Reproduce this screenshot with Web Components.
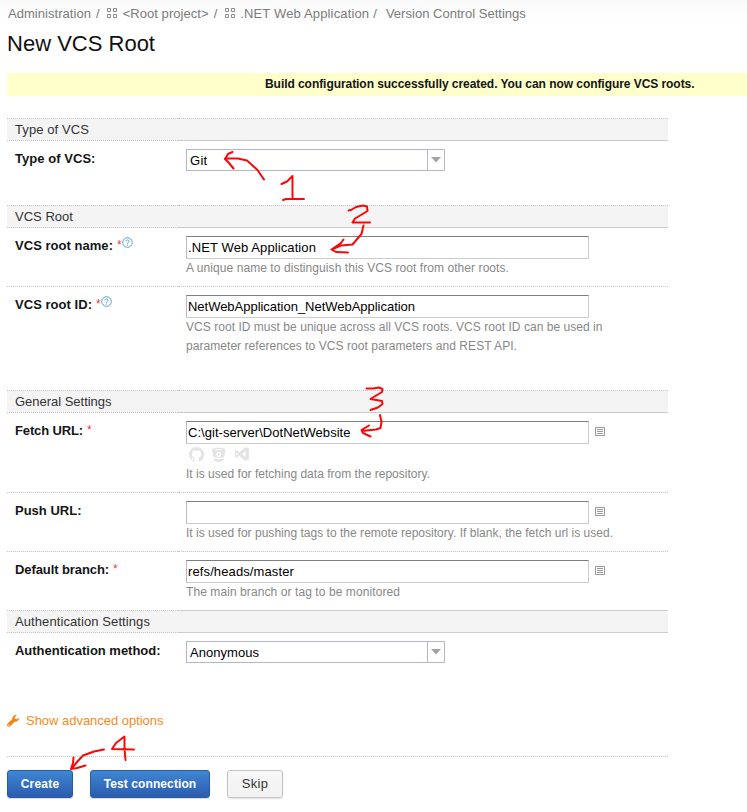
<!DOCTYPE html>
<html lang="en">
<head>
<meta charset="utf-8">
<title>New VCS Root</title>
<style>
  body { margin: 0; background: #fff; font: 13px "Liberation Sans", Arial, sans-serif; color: #151515; }
</style>
</head>
<body>
<vcs-page></vcs-page>
<script>
const define = (name, html, setup) => {
  const t = document.createElement('template');
  t.innerHTML = html;
  customElements.define(name, class extends HTMLElement {
    constructor() {
      super();
      this.attachShadow({ mode: 'open' }).appendChild(t.content.cloneNode(true));
    }
    connectedCallback() { if (setup) setup(this, this.shadowRoot); }
  });
};

/* A single line of text tracked out or in to an exact advance width. */
define('text-run', `<style>:host{display:inline-block;white-space:nowrap}span{display:inline-block}</style><span><slot></slot></span>`, (el, root) => {
  const w = parseFloat(el.getAttribute('w')), s = root.querySelector('span');
  if (!w) return;
  const natural = s.getBoundingClientRect().width;
  s.style.letterSpacing = ((w - natural) / el.textContent.length).toFixed(4) + 'px';
  el.style.width = w + 'px';
});

define('project-icon', `<style>:host{display:block;width:10px;height:10px}svg{display:block}</style>
<svg width="10" height="10" fill="none" stroke="#8c8c8c"><path d="M.5.5h3v3h-3zM6.5.5h3v3h-3zM.5 6.5h3v3h-3zM6.5 6.5h3v3h-3z"/></svg>`);

define('crumb-bar', `<style>
:host{display:flex;height:27px;padding-left:8px;line-height:19px;color:#7b7b7b;background:linear-gradient(#fafafa,#fff);box-sizing:border-box;padding-top:4px}
project-icon{margin-top:4px}
</style>
<text-run w="83">Administration</text-run><text-run style="margin-left:5px">/</text-run>
<project-icon style="margin-left:7px"></project-icon><text-run w="86" style="margin-left:6px">&lt;Root project&gt;</text-run><text-run style="margin-left:5px">/</text-run>
<project-icon style="margin-left:8px"></project-icon><text-run w="129" style="margin-left:5px">.NET Web Application</text-run><text-run style="margin-left:4px">/</text-run>
<text-run w="140" style="margin-left:9px">Version Control Settings</text-run>`);

define('page-title', `<style>:host{display:block;padding:4px 0 0 7px;height:46px;box-sizing:border-box;font-size:22px;line-height:25px;color:#111}</style><slot></slot>`);

define('notice-bar', `<style>:host{display:block;margin-left:7px;height:23px;background:#ffc;font-size:12px;font-weight:bold;line-height:23px;padding-left:258px;box-sizing:border-box;white-space:nowrap}</style><slot></slot>`);

define('section-head', `<style>
:host{display:grid;grid-template-columns:171px 1fr;height:23px;background:#f4f4f4;color:#333}
div{border-top:1px dotted #c4c4c4;border-bottom:1px dotted #c4c4c4;line-height:21px}
.t{padding-left:8px}
.r{border-bottom:1px solid #ccc}
:host([solid]) .r{border-top:1px solid #ccc}
</style><div class="t"><slot></slot></div><div class="r"></div>`);

define('form-row', `<style>
:host{display:grid;grid-template-columns:171px 1fr;box-sizing:border-box;height:var(--h)}
:host([line]) div{border-bottom:1px dotted #c4c4c4}
.l{padding:8px 0 0 8px;font-weight:bold;line-height:19px;display:flex;align-items:flex-start}
.v{padding:8px 0 0 8px}
</style><div class="l"><slot name="label"></slot></div><div class="v"><slot></slot></div>`);

define('required-mark', `<style>:host{display:block;width:5px;margin-left:4px;font-weight:normal;font-size:12px;line-height:19px;color:#e8403a}</style>*`);

define('help-icon', `<style>:host{display:block;width:10px;height:10px;margin:1px 0 0 0}svg{display:block}</style>
<svg width="11" height="11" fill="none" stroke="#5b9fd0"><circle cx="5.5" cy="5.5" r="4.8"/><path d="M3.9 4.4C3.9 2.4 7.1 2.5 7.1 4.3C7.1 5.3 5.5 5.4 5.5 6.8M5.5 7.6v1"/></svg>`);

define('text-field', `<style>
:host{display:flex}
.box{width:403px;height:23px;box-sizing:border-box;border:1px solid #ccc;border-top-color:#7f7f7f;border-left-color:#bbb;padding-left:1px;line-height:21px;color:#000;background:#fff}
svg{display:none;margin:6px 0 0 6px}
:host([menu]) svg{display:block}
</style><div class="box"><slot></slot></div>
<svg width="10" height="9" fill="none" stroke="#999"><path d="M.5.5h9v8h-9zM2 2.5h6M2 4.5h6M2 6.5h6"/></svg>`);

define('select-field', `<style>
:host{display:flex;width:259px;height:22px;box-sizing:border-box;border:1px solid #b5b5cb;background:#fff;color:#000;line-height:21px}
.v{width:240px;padding-left:3px;box-sizing:border-box}
.a{flex:1;border-left:1px solid #b5b5cb;display:flex;align-items:center;justify-content:center}
</style><div class="v"><slot></slot></div><div class="a"><svg width="10" height="6"><path d="M0 0h10L5 5.5z" fill="#a3a3a3"/></svg></div>`);

define('field-note', `<style>:host{display:block;font-size:12px;line-height:19px;color:#888}::slotted(text-run){display:block!important}</style><slot></slot>`);

define('host-icons', `<style>:host{display:block;height:21px;padding:3px 0 0 3px;box-sizing:border-box}svg{display:block}</style>
<svg width="62" height="16" fill="#e4e4e4">
<path d="M7.5 0C3.4 0 0 3.4 0 7.6c0 3.3 2.1 6.1 5.1 7.1.4.1.5-.2.5-.4v-1.6c-2 .4-2.5-.8-2.7-1.2-.2-.5-.8-1-.8-1.1.9-.3 1.5.6 1.8 1 .5.8 1.200.6 1.700.4.1-.5.3-.8.5-1C4 10.600 3 9.600 3 7.300c0-.9.3-1.500.8-2-.1-.3-.3-1.100.1-2.100 0 0 .7-.2 2.100.8 1-.3 2.200-.3 3.200 0 1.400-1 2-.8 2-.8.5 1 .2 1.800.1 2.100.5.5.8 1.200.8 2 0 2.300-1.100 3.300-2.800 3.500.3.300.5.700.5 1.400v2.100c0 .2.100.500.500.400 3-1 5-3.800 5-7.100C15.100 3.400 11.700 0 7.500 0z"/>
<path fill-rule="evenodd" d="M23 2.500C23 0 36.500 0 36.500 2.500L35.300 9.500C34 11.300 25.500 11.300 24.200 9.500zM25.200 2.600C26 3.600 33.500 3.600 34.300 2.600C33.500 1.700 26 1.700 25.200 2.600zM29.750 4.900a2.500 2.500 0 1 0 .01 0zM29.750 6.300a1.100 1.100 0 1 1-.01 0zM24.600 11C27 12.600 32.500 12.600 34.900 11L34.300 13.500C33 15.400 26.500 15.400 25.200 13.500z"/>
<path fill-rule="evenodd" d="M56.500 0L60 1.400V12.600L56.500 14L50.300 8.700L47.300 11L46 10.300V3.700L47.300 3L50.300 5.300zM56.500 4L53 7L56.500 10zM47.500 5.300V8.700L49.200 7z"/>
</svg>`);

define('advanced-link', `<style>:host{display:flex;padding-left:7px;color:#f98a18;line-height:19px}svg{display:block;margin:4px 7px 0 0}</style>
<svg width="12" height="12" viewBox="0 0 12 12"><path fill="#fb820a" d="M11.800 2.400L9.800 4.300L8.100 3.900L7.700 2.200L9.600.2C7.500-.3 5.200 1.200 5.300 4.100L.5 8.800C-.2 9.600-.1 10.600.5 11.300C1.200 12 2.400 12 3.100 11.300L7.700 6.700C10.400 7 12.300 4.800 11.800 2.400zM1.800 9.600a.6.6 0 1 1-.01 0z"/></svg><slot></slot>`);

define('push-button', `<style>
:host{display:block;box-sizing:border-box;height:28px;border:1px solid #2a5ba6;border-radius:3px;background:linear-gradient(#3f86d3,#2b5cae);color:#fff;font-size:12px;font-weight:bold;text-align:center;line-height:26px;box-shadow:0 1px 1px rgba(0,0,0,.15)}
:host([plain]){background:linear-gradient(#f7f7f7,#f2f2f2);border-color:#c4c4c4;color:#333;font-size:13px;font-weight:normal;box-shadow:0 1px 2px rgba(0,0,0,.12)}
</style><slot></slot>`);

/* Hand-drawn step marks lying over the form. */
define('step-marks', `<style>:host{position:absolute;left:0;top:0;width:747px;height:812px;pointer-events:none}svg{display:block}</style>
<svg width="747" height="812" fill="none" stroke="#f80808" stroke-width="2" stroke-linecap="round" stroke-linejoin="round">
<path d="M232.500 152L228 154L225 159L229 163L233.500 168.500M225 158.500L238 158.500L247 160.500L257.500 170L264 179.500"/>
<path d="M281.500 184L287 181.500L292.500 176V198.500M283 200L286 199H304"/>
<path d="M348.500 210.500L351 210L356 207L363 205.500L367 206.500L367.500 211L361 215L355 218.500L352.500 222.500H370"/>
<path d="M363.500 225.500L361.500 234L358 238L352.500 244.500L341 245.500L331.500 249.500M343.500 239.500L341 243L331.500 249.500L336 252L348 252.500"/>
<path d="M366.500 388.500H373L379 387.500L382.500 389L382 392L370.500 399L382 401L382.500 404L378 407.500L370.500 410"/>
<path d="M380 415L381.500 422L380.500 428L376 429.500L362 431M369 425.500L361.500 430L363 433L370.500 436.500"/>
<path d="M134 749.500L112 749L116 743L124.500 736.500V749L125.500 760"/>
<path d="M104 749.500L94 751.500L83 755.500L77 762L71.500 768.500M73.500 757.500L73 763L71 769L77 768L85.500 765.500"/>
</svg>`);

define('vcs-page', `<style>
:host{display:block;position:relative;width:747px;height:812px;overflow:hidden}
main{width:661px;margin:22px 0 0 7px}
hr{margin:0 0 0 7px;width:661px;border:0;border-top:1px dotted #c4c4c4;box-sizing:border-box}
.buttons{display:flex;gap:17px;padding:13px 0 0 7px}
</style>
<crumb-bar></crumb-bar>
<page-title><text-run w="148">New VCS Root</text-run></page-title>
<notice-bar><text-run w="429.500">Build configuration successfully created. You can now configure VCS roots.</text-run></notice-bar>
<main>
<section-head><text-run w="74">Type of VCS</text-run></section-head>
<form-row style="--h:64px"><text-run slot="label" w="80.500">Type of VCS:</text-run><select-field><text-run w="17.500">Git</text-run></select-field></form-row>
<section-head><text-run w="58">VCS Root</text-run></section-head>
<form-row line style="--h:59px"><text-run slot="label" w="98">VCS root name:</text-run><required-mark slot="label"></required-mark><help-icon slot="label"></help-icon>
<text-field><text-run w="128">.NET Web Application</text-run></text-field><field-note><text-run w="323">A unique name to distinguish this VCS root from other roots.</text-run></field-note></form-row>
<form-row style="--h:103px"><text-run slot="label" w="77">VCS root ID:</text-run><required-mark slot="label"></required-mark><help-icon slot="label"></help-icon>
<text-field><text-run w="227">NetWebApplication_NetWebApplication</text-run></text-field><field-note><text-run w="416.500">VCS root ID must be unique across all VCS roots. VCS root ID can be used in</text-run><text-run w="331">parameter references to VCS root parameters and REST API.</text-run></field-note></form-row>
<section-head><text-run w="96.500">General Settings</text-run></section-head>
<form-row line style="--h:80px"><text-run slot="label" w="68">Fetch URL:</text-run><required-mark slot="label"></required-mark>
<text-field menu><text-run w="162.500">C:&#92;git-server&#92;DotNetWebsite</text-run></text-field><host-icons></host-icons><field-note><text-run w="244">It is used for fetching data from the repository.</text-run></field-note></form-row>
<form-row line style="--h:59px"><text-run slot="label" w="66.500">Push URL:</text-run>
<text-field menu></text-field><field-note><text-run w="427">It is used for pushing tags to the remote repository. If blank, the fetch url is used.</text-run></field-note></form-row>
<form-row style="--h:58px"><text-run slot="label" w="94">Default branch:</text-run><required-mark slot="label"></required-mark>
<text-field menu><text-run w="106">refs/heads/master</text-run></text-field><field-note><text-run w="214">The main branch or tag to be monitored</text-run></field-note></form-row>
<section-head solid><text-run w="135">Authentication Settings</text-run></section-head>
<form-row style="--h:78px"><text-run slot="label" w="145.500">Authentication method:</text-run><select-field><text-run w="69">Anonymous</text-run></select-field></form-row>
</main>
<advanced-link><text-run w="137.500">Show advanced options</text-run></advanced-link>
<hr style="margin-top:26px">
<div class="buttons">
<push-button style="width:66px"><text-run w="38.500">Create</text-run></push-button>
<push-button style="width:120px"><text-run w="92.500">Test connection</text-run></push-button>
<push-button plain style="width:56px"><text-run w="26.500">Skip</text-run></push-button>
</div>
<step-marks></step-marks>`);
</script>
</body>
</html>
